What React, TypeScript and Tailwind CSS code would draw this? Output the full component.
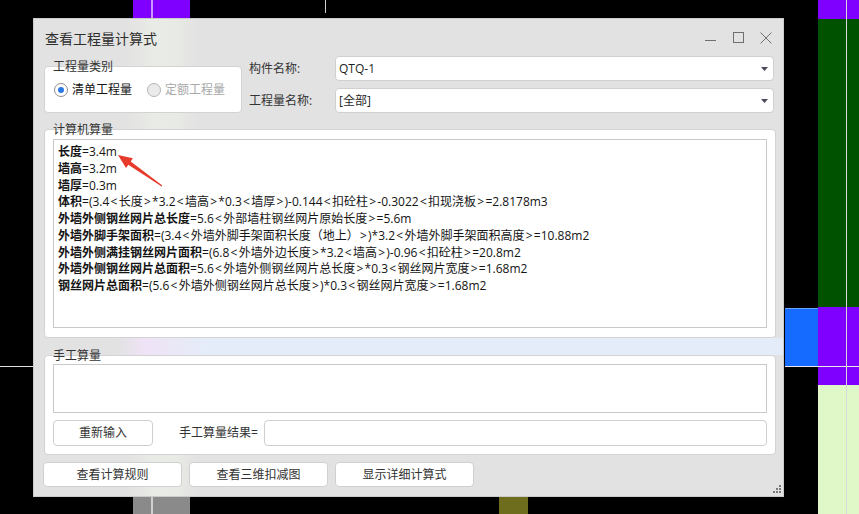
import React from 'react';

const calcLines: [string, string][] = [
  ['长度', '=3.4m'],
  ['墙高', '=3.2m'],
  ['墙厚', '=0.3m'],
  ['体积', '=(3.4<长度>*3.2<墙高>*0.3<墙厚>)-0.144<扣砼柱>-0.3022<扣现浇板>=2.8178m3'],
  ['外墙外侧钢丝网片总长度', '=5.6<外部墙柱钢丝网片原始长度>=5.6m'],
  ['外墙外脚手架面积', '=(3.4<外墙外脚手架面积长度（地上）>)*3.2<外墙外脚手架面积高度>=10.88m2'],
  ['外墙外侧满挂钢丝网片面积', '=(6.8<外墙外边长度>*3.2<墙高>)-0.96<扣砼柱>=20.8m2'],
  ['外墙外侧钢丝网片总面积', '=5.6<外墙外侧钢丝网片总长度>*0.3<钢丝网片宽度>=1.68m2'],
  ['钢丝网片总面积', '=(5.6<外墙外侧钢丝网片总长度>)*0.3<钢丝网片宽度>=1.68m2'],
];

const Caret = () => (
  <svg width="7" height="4" viewBox="0 0 7 4" className="mr-[5px]">
    <path d="M0 0 L7 0 L3.5 4 Z" fill="#4b4b5a" />
  </svg>
);

// the original font draws < and > with a bit of air on both sides
const Formula = ({ text }: { text: string }) => (
  <>
    {text.split(/([<>])/).map((part, i) =>
      part === '<' || part === '>' ? (
        <span key={i} className="mx-[1.25px]">{part}</span>
      ) : (
        <span key={i}>{part}</span>
      )
    )}
  </>
);

const Backdrop = () => (
  <>
    {/* left purple / gray column */}
    <div className="absolute left-[133px] top-0 h-[18px] w-[57px] bg-[#8000ff]" />
    <div className="absolute left-[151px] top-0 h-[18px] w-[2px] bg-[#c999ff]" />
    <div className="absolute left-[133px] top-[497px] h-[17px] w-[57px] bg-[#8a8a8a]" />
    <div className="absolute left-[151px] top-[497px] h-[17px] w-[2px] bg-[#cfcfcf]" />
    <div className="absolute left-[325px] top-0 h-[13px] w-px bg-[#d0d0d0]" />
    <div className="absolute left-0 top-[366px] h-px w-[33px] bg-[#e0e0e0]" />
    <div className="absolute left-[499px] top-[497px] h-[17px] w-[29px] bg-[#6d6d1d]" />
    {/* right column */}
    <div className="absolute left-[818px] top-0 flex h-[514px] w-[41px] flex-col">
      <div className="h-[19px] bg-[#8000ff]" />
      <div className="h-[288px] bg-[#005200]" />
      <div className="h-[78px] bg-[#8000ff]" />
      <div className="flex-1 bg-[#e0f8c8]" />
    </div>
    <div className="absolute left-[846px] top-0 h-[514px] w-px bg-[#d8d8d8]" />
    <div className="absolute left-[785px] top-[308px] h-[58px] w-[33px] border-t border-[#6aa2ff] bg-[#156bff]" />
    <div className="absolute left-[785px] top-[366px] h-px w-[74px] bg-[#e8e8e8]" />
  </>
);

export default function App() {
  return (
    <div className="relative h-[514px] w-[859px] overflow-hidden bg-black font-['Open_Sans','Noto_Sans_CJK_SC',sans-serif] text-[12px] text-[#1f1f1f]">
      <Backdrop />

      <div className="absolute left-[33px] top-[18px] flex h-[479px] w-[751px] flex-col border border-[#cbcbcb] bg-[#e2e2e2] bg-[linear-gradient(90deg,#e2e2e2_92px,#e9ece6_122px,#e8ebe5_140px,#e2e2e2_165px)]">
        {/* title bar */}
        <div className="flex h-[37px] shrink-0 items-center justify-between pl-[11px] pr-[11px]">
          <span className="pt-[1px] text-[14px] text-[#2f2f2f]">查看工程量计算式</span>
          <div className="flex items-center">
            <svg width="11" height="11" viewBox="0 0 11 11">
              <line x1="0" y1="8.5" x2="11" y2="8.5" stroke="#6f6f6f" strokeWidth="1" />
            </svg>
            <svg width="11" height="11" viewBox="0 0 11 11" className="ml-[17px]">
              <rect x="0.5" y="0.5" width="10" height="10" fill="none" stroke="#6f6f6f" strokeWidth="1" />
            </svg>
            <svg width="12" height="12" viewBox="0 0 12 12" className="ml-[16px]">
              <path d="M0.5 0.5 L11.5 11.5 M11.5 0.5 L0.5 11.5" stroke="#6f6f6f" strokeWidth="1" />
            </svg>
          </div>
        </div>

        {/* category + names */}
        <div className="flex h-[57px] shrink-0 pl-[10px] pr-[9px]">
          <div className="relative mt-[10px] flex h-[47px] w-[198px] items-center rounded-[4px] border border-[#d3d3d3] bg-white pl-[9px]">
            <span className="absolute -top-[9px] left-[8px] text-[12px] text-[#333]">工程量类别</span>
            <span className="flex h-[14px] w-[14px] items-center justify-center rounded-full border border-[#8c8c8c] bg-white">
              <span className="h-[6px] w-[6px] rounded-full bg-[#2a78e4]" />
            </span>
            <span className="ml-[4px] text-[#141414]">清单工程量</span>
            <span className="ml-[15px] h-[14px] w-[14px] rounded-full border border-[#b4b4b4] bg-[#ebebeb]" />
            <span className="ml-[4px] text-[#a9a9a9]">定额工程量</span>
          </div>
          <div className="ml-[7px] flex flex-1 flex-col gap-[7px]">
            <div className="flex h-[25px] items-center">
              <span className="w-[86px] text-[#333]">构件名称:</span>
              <div className="flex h-[25px] flex-1 items-center justify-between rounded-[4px] border border-[#cfcfcf] bg-white pl-[3px]">
                <span>QTQ-1</span>
                <Caret />
              </div>
            </div>
            <div className="flex h-[25px] items-center">
              <span className="w-[86px] text-[#333]">工程量名称:</span>
              <div className="flex h-[25px] flex-1 items-center justify-between rounded-[4px] border border-[#cfcfcf] bg-white pl-[3px]">
                <span>[全部]</span>
                <Caret />
              </div>
            </div>
          </div>
        </div>

        {/* computer calculation */}
        <div className="relative ml-[10px] mt-[16px] flex h-[209px] w-[732px] shrink-0 flex-col rounded-[4px] border border-[#d3d3d3] bg-white px-[8px] py-[9px]">
          <span className="absolute -top-[9px] left-[8px] text-[#333]">计算机算量</span>
          <div className="flex-1 border border-[#c9c9c9] bg-white px-[4px] pt-[4px] leading-[16.75px] text-[#141414]">
            {calcLines.map(([label, rest]) => (
              <div key={label} className="whitespace-nowrap">
                <span className="font-bold">{label}</span>
                <Formula text={rest} />
              </div>
            ))}
          </div>
        </div>

        {/* acrylic band between the groups */}
        <div className="h-[17px] shrink-0 bg-[linear-gradient(90deg,#e2e2e2_82px,#efe3f7_112px,#e8e9f6_150px,#e4ecfa_175px,#e4ecfa)]" />

        {/* manual calculation */}
        <div className="relative ml-[10px] flex h-[100px] w-[732px] shrink-0 flex-col rounded-[4px] border border-[#d3d3d3] bg-white px-[8px] pb-[8px] pt-[8px]">
          <span className="absolute -top-[9px] left-[8px] text-[#333]">手工算量</span>
          <div className="h-[49px] border border-[#c9c9c9] bg-white" />
          <div className="mt-[7px] flex h-[26px] items-center">
            <button className="h-[26px] w-[100px] rounded-[4px] border border-[#cfcfcf] bg-white text-[#333]">重新输入</button>
            <span className="ml-[26px] text-[#333]">手工算量结果=</span>
            <div className="ml-[6px] h-[26px] flex-1 rounded-[4px] border border-[#cfcfcf] bg-white" />
          </div>
        </div>

        {/* bottom buttons */}
        <div className="ml-[9px] mt-[7px] flex gap-[7px]">
          <button className="h-[25px] w-[139px] rounded-[4px] border border-[#d0d0d0] bg-white text-[#333]">查看计算规则</button>
          <button className="h-[25px] w-[139px] rounded-[4px] border border-[#d0d0d0] bg-white text-[#333]">查看三维扣减图</button>
          <button className="h-[25px] w-[139px] rounded-[4px] border border-[#d0d0d0] bg-white text-[#333]">显示详细计算式</button>
        </div>

        <svg width="9" height="9" viewBox="0 0 9 9" className="absolute bottom-[3px] right-[2px]">
          <rect x="7" y="1" width="2" height="2" fill="#7a7a7a" />
          <rect x="4" y="4" width="2" height="2" fill="#7a7a7a" />
          <rect x="7" y="4" width="2" height="2" fill="#7a7a7a" />
          <rect x="1" y="7" width="2" height="2" fill="#7a7a7a" />
          <rect x="4" y="7" width="2" height="2" fill="#7a7a7a" />
          <rect x="7" y="7" width="2" height="2" fill="#7a7a7a" />
        </svg>
      </div>

      {/* red annotation arrow */}
      <svg width="859" height="514" className="pointer-events-none absolute left-0 top-0">
        <polygon
          points="118,155 132.9,158.2 130.7,161.5 162.3,185.6 161.7,186.4 128.3,164.7 126,168"
          fill="#e63a2b"
        />
      </svg>
    </div>
  );
}
